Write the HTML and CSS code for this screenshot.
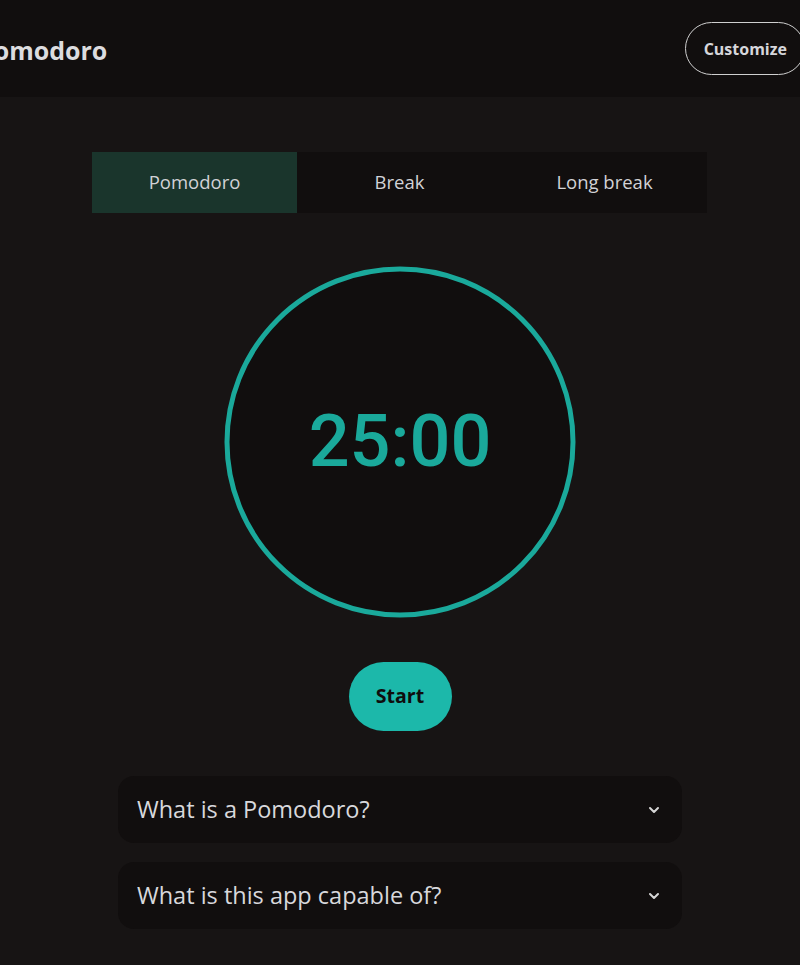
FILE: index.html
```html
<!DOCTYPE html>
<html lang="en">
<head>
<meta charset="utf-8">
<title>Pomodoro</title>
<link rel="stylesheet" href="styles.css">
</head>
<body>
<header class="topbar">
  <div class="topbar-inner">
    <h1 class="brand">Pomodoro</h1>
    <button class="customize">Customize</button>
  </div>
</header>
<main class="main">
  <nav class="tabs">
    <button class="tab active">Pomodoro</button>
    <button class="tab">Break</button>
    <button class="tab">Long break</button>
  </nav>
  <div class="timer">
    <svg class="ring" width="356" height="356" viewBox="0 0 356 356">
      <circle cx="178" cy="178" r="173" fill="#110e0e" stroke="#1aa99b" stroke-width="5"/>
    </svg>
    <div class="time">25:00</div>
  </div>
  <button class="start">Start</button>
  <section class="faq">
    <div class="faq-item">
      <span class="faq-q">What is a Pomodoro?</span>
      <svg class="chev" width="14" height="14" viewBox="0 0 14 14"><path d="M3 5l4 4 4-4" fill="none" stroke="#d6d6d6" stroke-width="2" stroke-linecap="round" stroke-linejoin="round"/></svg>
    </div>
    <div class="faq-item">
      <span class="faq-q">What is this app capable of?</span>
      <svg class="chev" width="14" height="14" viewBox="0 0 14 14"><path d="M3 5l4 4 4-4" fill="none" stroke="#d6d6d6" stroke-width="2" stroke-linecap="round" stroke-linejoin="round"/></svg>
    </div>
  </section>
</main>
</body>
</html>
```
FILE: styles.css
```css
* { box-sizing: border-box; }
html, body { margin: 0; padding: 0; }
body {
  background: #171414;
  font-family: "Open Sans", "Noto Sans", sans-serif;
  color: #d6d6d8;
  overflow: hidden;
}
.topbar {
  background: #110e0e;
  height: 97px;
}
.topbar-inner {
  display: flex;
  align-items: center;
  justify-content: space-between;
  height: 100%;
  margin: 0 -5px 0 -22px;
}
.brand {
  margin: 0;
  font-size: 25px;
  font-weight: 700;
  color: #dcdcdf;
  padding-top: 2px;
}
.customize {
  height: 53px;
  padding: 0 17px 0 18px;
  border: 1px solid #cfcfcf;
  border-radius: 27px;
  background: transparent;
  color: #d6d6db;
  font-family: inherit;
  font-size: 16px;
  font-weight: 700;
}
.main {
  display: flex;
  flex-direction: column;
  align-items: center;
  padding-top: 55px;
}
.tabs {
  display: grid;
  grid-template-columns: repeat(3, 205px);
  background: #110e0e;
  height: 61px;
  margin-left: -1px;
}
.tab {
  border: 0;
  background: transparent;
  color: #d2d2d6;
  font-family: inherit;
  font-size: 18.5px;
  font-weight: 500;
  padding: 0 0 2px;
}
.tab.active { background: #1a352c; }
.timer {
  position: relative;
  width: 356px;
  height: 356px;
  margin-top: 51px;
}
.ring { display: block; }
.time {
  position: absolute;
  inset: 0;
  display: flex;
  align-items: center;
  justify-content: center;
  font-family: Roboto, "Noto Sans", sans-serif;
  font-size: 72px;
  font-weight: 500;
  color: #1aa99b;
  padding-bottom: 2px;
}
.start {
  margin-top: 42px;
  width: 103px;
  height: 69px;
  border: 0;
  border-radius: 35px;
  background: #1cb8aa;
  color: #0f0d0d;
  font-family: inherit;
  font-size: 19.5px;
  font-weight: 700;
  padding: 0 0 2px;
}
.faq {
  margin-top: 45px;
  display: flex;
  flex-direction: column;
  gap: 19px;
  width: 564px;
}
.faq-item {
  display: flex;
  align-items: center;
  justify-content: space-between;
  height: 67px;
  padding: 0 19px;
  background: #110e0e;
  border-radius: 16px;
}
.faq-q {
  font-size: 23.5px;
  font-weight: 500;
  color: #d8d8dc;
  padding-bottom: 2px;
}
.chev { display: block; margin-right: 2px; }
```
